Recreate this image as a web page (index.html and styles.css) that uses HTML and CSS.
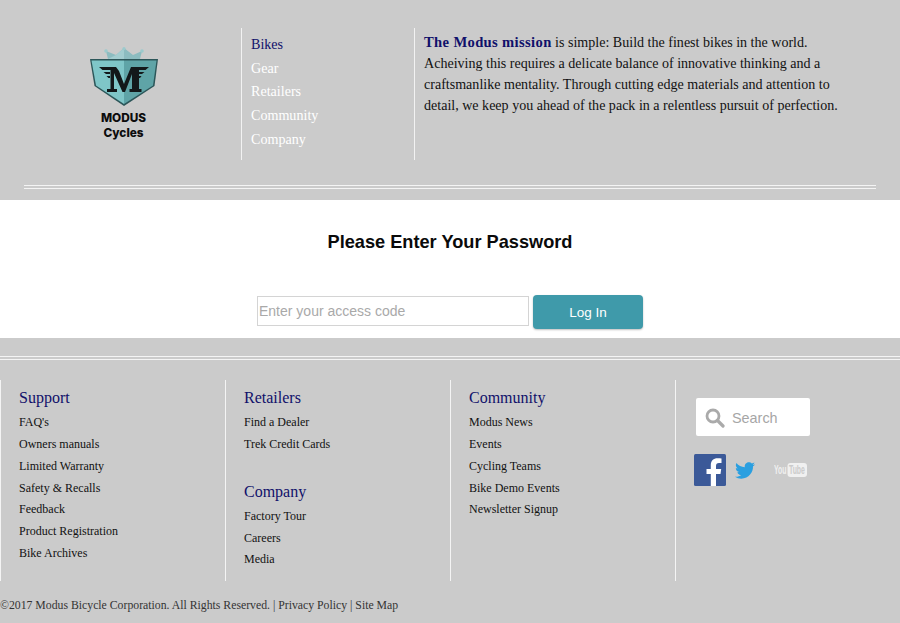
FILE: index.html
```html
<!DOCTYPE html>
<html lang="en">
<head>
<meta charset="utf-8">
<title>Modus Cycles</title>
<link rel="stylesheet" href="styles.css">
</head>
<body>
<header class="top">
  <div class="top-row">
    <div class="logo">
      <svg class="logo-mark" viewBox="0 0 70 59" width="70" height="59" aria-hidden="true">
        <path d="M19 12 L17 4 L27 8 L35 1 L44 8 L53 4 L51 12 Z" fill="#8cbcc0"/>
        <path d="M27 8 L35 1 L35 12 H19 Z" fill="#a3cdd0"/>
        <circle cx="17" cy="4" r="1.800" fill="#9ccacd"/><circle cx="35" cy="1.600" r="1.600" fill="#9ccacd"/><circle cx="53" cy="4" r="1.800" fill="#9ccacd"/>
        <path d="M1 12 H69 L65.500 39 L35 59 L5.500 39 Z" fill="#2c5659"/>
        <path d="M2.500 13.500 H35 V57 L7 38.500 Z" fill="#7fc6c8"/>
        <path d="M35 13.500 H67.500 L64 38.500 L35 57 Z" fill="#5fa4a7"/>
        <path d="M10 20 H27 L30 24 L35 37 L42 20 H60 L56.500 23 H50 V42 H52.500 V45 H40.500 V42 H43 V27 L36 45 H33.500 L25 26 V42 H28 V45 H18 V42 H21.500 V23 H13.500 Z" fill="#13181a"/>
        <path d="M14.500 25 H21 V27 H17 Z M17.500 29 H21 V31 H19.500 Z M55.500 25 H50 V27 H53 Z M52.500 29 H50 V31 H51 Z" fill="#13181a"/>
      </svg>
      <div class="logo-text"><span>MODUS</span><span>Cycles</span></div>
    </div>
    <nav class="main-nav">
      <a class="current" href="#">Bikes</a>
      <a href="#">Gear</a>
      <a href="#">Retailers</a>
      <a href="#">Community</a>
      <a href="#">Company</a>
    </nav>
    <p class="mission"><strong>The Modus mission</strong> is simple: Build the finest bikes in the world. Acheiving this requires a delicate balance of innovative thinking and a craftsmanlike mentality. Through cutting edge materials and attention to detail, we keep you ahead of the pack in a relentless pursuit of perfection.</p>
  </div>
  <div class="rule rule-inset"></div>
</header>
<main class="login">
  <h1>Please Enter Your Password</h1>
  <form class="login-form">
    <input class="code" type="text" placeholder="Enter your access code">
    <button class="submit" type="button">Log In</button>
  </form>
</main>
<footer class="foot">
  <div class="rule"></div>
  <div class="foot-cols">
    <section class="col">
      <h2>Support</h2>
      <a href="#">FAQ's</a><a href="#">Owners manuals</a><a href="#">Limited Warranty</a><a href="#">Safety &amp; Recalls</a><a href="#">Feedback</a><a href="#">Product Registration</a><a href="#">Bike Archives</a>
    </section>
    <section class="col">
      <h2>Retailers</h2>
      <a href="#">Find a Dealer</a><a href="#">Trek Credit Cards</a>
      <h2 class="second">Company</h2>
      <a href="#">Factory Tour</a><a href="#">Careers</a><a href="#">Media</a>
    </section>
    <section class="col">
      <h2>Community</h2>
      <a href="#">Modus News</a><a href="#">Events</a><a href="#">Cycling Teams</a><a href="#">Bike Demo Events</a><a href="#">Newsletter Signup</a>
    </section>
    <section class="col col-side">
      <div class="search">
        <svg viewBox="0 0 20 20" width="20" height="20" aria-hidden="true"><circle cx="8" cy="8" r="6" fill="none" stroke="#aaa" stroke-width="2.800"/><path d="M12.500 12.500 L18 18" stroke="#aaa" stroke-width="3.200" stroke-linecap="round"/></svg>
        <span>Search</span>
      </div>
      <div class="social">
        <svg class="fb" viewBox="0 0 32 32" width="32" height="32" aria-hidden="true"><rect width="32" height="32" rx="1.500" fill="#3b5998"/><path d="M22 32 V20 H26.500 L27.200 15 H22 V12 C22 10 22.800 9 25 9 H27.500 V4.600 C26.500 4.400 25 4.300 23.500 4.300 C19.500 4.300 16.800 6.800 16.800 11.300 V15 H12.500 V20 H16.800 V32 Z" fill="#fff"/></svg>
        <svg class="tw" viewBox="0 0 24 20" width="20" height="17" aria-hidden="true"><path d="M24 2.400 C23.100 2.800 22.200 3 21.200 3.200 C22.200 2.500 23 1.600 23.400 .400 C22.400 1 21.300 1.400 20.200 1.600 C19.300 .600 18 0 16.600 0 C13.400 0 11.100 3 11.800 6 C7.700 5.800 4.100 3.900 1.700 .900 C.400 3.100 1 6 3.200 7.500 C2.400 7.500 1.600 7.200 1 6.900 C1 9.200 2.600 11.400 5 11.900 C4.300 12.100 3.500 12.100 2.800 12 C3.400 14 5.300 15.400 7.500 15.500 C5.400 17.100 2.700 17.900 0 17.500 C2.200 19 4.900 19.800 7.500 19.800 C16.700 19.800 21.900 12 21.600 5 C22.600 4.300 23.400 3.400 24 2.400 Z" fill="#2a9fe0"/></svg>
        <svg class="yt" viewBox="0 0 33 14" width="33" height="14" role="img" aria-label="YouTube"><rect x="13.500" y="0" width="19.500" height="14" rx="3" fill="#f0f0f0"/><g transform="scale(.575 1)"><text class="yt-you" x="0" y="11.500">You</text><text class="yt-tube" x="26" y="11.500">Tube</text></g></svg>
      </div>
    </section>
  </div>
  <p class="legal">©2017 Modus Bicycle Corporation. All Rights Reserved. | <a href="#">Privacy Policy</a> | <a href="#">Site Map</a></p>
</footer>
</body>
</html>
```
FILE: styles.css
```css
* { box-sizing: border-box; }
html, body { margin: 0; height: 100%; }
body { background: #cbcbcb; font-family: "Liberation Serif", "DejaVu Serif", serif; overflow: hidden; }
a { color: inherit; text-decoration: none; }

.top { height: 200px; padding-top: 28px; }
.top-row { display: flex; height: 132px; }
.logo { width: 241px; display: flex; flex-direction: column; align-items: center; padding: 19px 0 0 6px; }
.logo-mark { display: block; }
.logo-text { display: flex; flex-direction: column; align-items: center; margin-top: 5px; font: 800 11.800px/14.500px Inter, "Liberation Sans", sans-serif; color: #0c0c0c; }
.main-nav { width: 173px; border-left: 1px solid #f2f2f2; display: flex; flex-direction: column; padding: 5px 0 0 9px; font-size: 14.100px; line-height: 23.700px; color: #fff; }
.main-nav .current { color: #10106a; }
.mission { margin: 0; flex: 1; border-left: 1px solid #f2f2f2; padding: 4px 60px 0 9px; font-size: 14.050px; line-height: 21px; color: #111; }
.mission strong { color: #10106a; font-size: 14.600px; line-height: 1; letter-spacing: .35px; }

.rule { height: 4px; border-top: 1px solid #f4f4f4; border-bottom: 1px solid #f4f4f4; }
.rule-inset { margin: 25px 24px 0; }

.login { background: #fff; height: 138px; padding-top: 31px; display: flex; flex-direction: column; align-items: center; }
.login h1 { margin: 0; font: 700 18.200px/22px "Liberation Sans", Arial, sans-serif; color: #0a0a0a; }
.login-form { display: flex; align-items: flex-start; gap: 4px; margin-top: 42px; }
.code { width: 272px; height: 30px; margin-top: 1px; border: 1px solid #d4d4d4; padding: 0 1px; background: #fff; font: 14px "Liberation Sans", Arial, sans-serif; outline: 0; }
.code::placeholder { color: #a9a9a9; opacity: 1; }
.submit { width: 110px; height: 34px; border: 0; border-radius: 4px; background: #3f9aaa; color: #fff; font: 13.500px "Liberation Sans", Arial, sans-serif; box-shadow: 0 1px 2px rgba(0,0,0,.25); }

.foot { padding-top: 18px; }
.foot-cols { display: grid; grid-template-columns: 225px 225px 225px 225px; margin-top: 20px; height: 201px; }
.col { border-left: 1px solid #f4f4f4; padding: 8px 0 0 18px; display: flex; flex-direction: column; align-items: flex-start; font-size: 12px; line-height: 21.850px; color: #111; }
.col h2 { margin: 0 0 4px; font-weight: 400; font-size: 16px; line-height: 20px; color: #10106a; }
.col h2.second { margin-top: 26px; }
.col-side { padding: 18px 0 0 20px; }
.search { width: 114px; height: 38px; background: #fff; border-radius: 2px; display: flex; align-items: center; gap: 7px; padding: 1px 0 0 9px; font: 14.400px "Liberation Sans", Arial, sans-serif; color: #a6a6a6; }
.social { display: flex; align-items: center; margin: 18px 0 0 -2px; }
.fb { display: block; }
.tw { display: block; margin-left: 9px; }
.yt { display: block; margin-left: 19px; }
.yt text { font: 700 12px "Liberation Sans", Arial, sans-serif; }
.yt-you { fill: #f0f0f0; }
.yt-tube { fill: #cbcbcb; }
.legal { margin: 17px 0 0; font-size: 11.750px; line-height: 16px; color: #333; }
```
